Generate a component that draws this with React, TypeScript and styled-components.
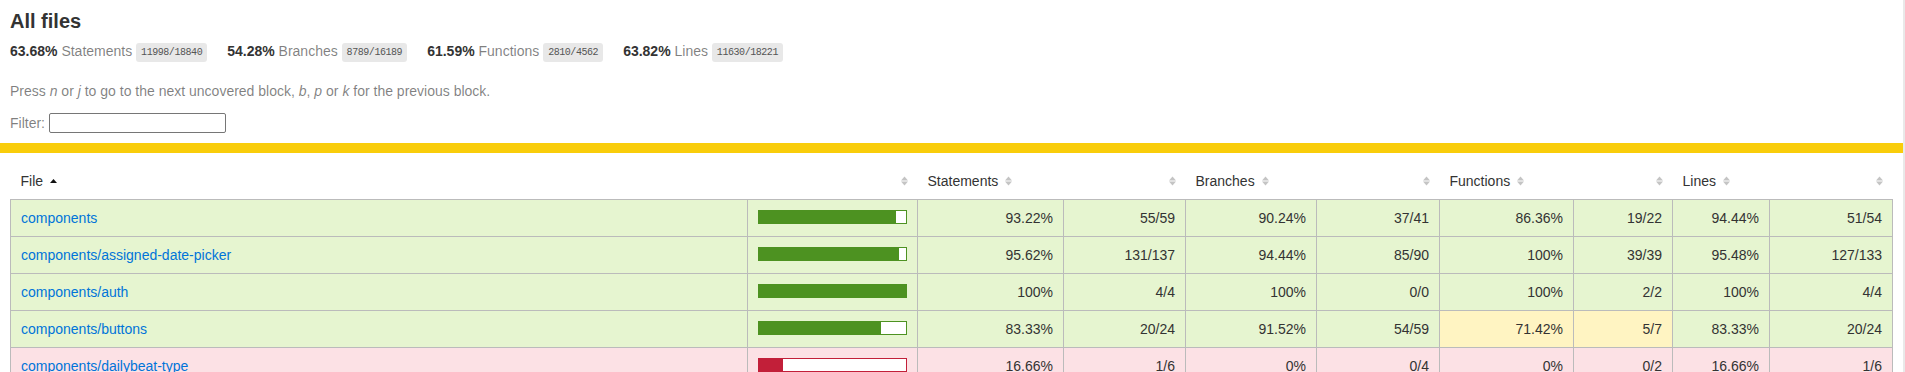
import React from 'react'
import styled, { createGlobalStyle } from 'styled-components'

type Level = 'high' | 'medium' | 'low'

interface Metric {
    pct: string
    covered: number
    total: number
}

interface FileRow {
    name: string
    statements: Metric
    branches: Metric
    functions: Metric
    lines: Metric
}

const m = (pct: string, covered: number, total: number): Metric => ({ pct, covered, total })

const rows: FileRow[] = [
    { name: 'components', statements: m('93.22%', 55, 59), branches: m('90.24%', 37, 41), functions: m('86.36%', 19, 22), lines: m('94.44%', 51, 54) },
    { name: 'components/assigned-date-picker', statements: m('95.62%', 131, 137), branches: m('94.44%', 85, 90), functions: m('100%', 39, 39), lines: m('95.48%', 127, 133) },
    { name: 'components/auth', statements: m('100%', 4, 4), branches: m('100%', 0, 0), functions: m('100%', 2, 2), lines: m('100%', 4, 4) },
    { name: 'components/buttons', statements: m('83.33%', 20, 24), branches: m('91.52%', 54, 59), functions: m('71.42%', 5, 7), lines: m('83.33%', 20, 24) },
    { name: 'components/dailybeat-type', statements: m('16.66%', 1, 6), branches: m('0%', 0, 4), functions: m('0%', 0, 2), lines: m('16.66%', 1, 6) },
]

const percent = (x: Metric) => (x.total === 0 ? 100 : (x.covered / x.total) * 100)
const levelOf = (x: Metric): Level => {
    const p = percent(x)
    return p >= 80 ? 'high' : p >= 50 ? 'medium' : 'low'
}

const light: Record<Level, string> = {
    high: 'rgb(230, 245, 208)',
    medium: '#fff4c2',
    low: '#fce1e5',
}

const dark: Record<Level, string> = {
    high: 'rgb(77, 146, 33)',
    medium: '#f9cd0b',
    low: '#c21f39',
}

const GlobalStyle = createGlobalStyle`
    *, *:after, *:before { box-sizing: border-box; }
    html, body {
        margin: 0;
        padding: 0;
        height: 100%;
        overflow: hidden;
    }
    body {
        font-family: "Liberation Sans", Arial, sans-serif;
        font-size: 14px;
        color: #333;
        background: #fff;
        border-right: 2px solid #e9e9e9;
    }
`

const Header = styled.div`
    padding: 10px;
`

const Title = styled.h1`
    font-size: 20px;
    font-weight: bold;
    margin: 0;
`

const Stats = styled.div`
    display: flex;
    padding: 10px 0;
`

const Stat = styled.div`
    padding-right: 20px;
    white-space: nowrap;
`

const Strong = styled.span`
    font-weight: bold;
`

const Quiet = styled.span`
    color: rgba(0, 0, 0, 0.5);
`

const Fraction = styled.span`
    font-family: "Liberation Mono", monospace;
    font-size: 10px;
    letter-spacing: -0.45px;
    color: #555;
    background: #e8e8e8;
    padding: 4px 5px;
    border-radius: 3px;
    vertical-align: middle;
`

const Hint = styled.p`
    margin: 14px 0;
    color: rgba(0, 0, 0, 0.5);
`

const FilterRow = styled.div`
    display: flex;
    align-items: center;
    gap: 4px;
    height: 20px;
    color: rgba(0, 0, 0, 0.5);
`

const Search = styled.input`
    width: 177px;
    height: 20px;
    padding: 1px 2px;
    border: 1px solid #767676;
    border-radius: 2px;
    background: #fff;
    font: inherit;
`

const StatusLine = styled.div<{ $level: Level }>`
    height: 10px;
    background: ${p => dark[p.$level]};
`

const TableWrap = styled.div`
    padding: 10px;
`

const Table = styled.table`
    width: 100%;
    border-collapse: collapse;
    table-layout: fixed;
`

const Body = styled.tbody`
    border: 1px solid #bbb;
`

const BodyRow = styled.tr`
    border-bottom: 1px solid #bbb;
`

const HeadCell = styled.th<{ $right?: boolean }>`
    padding: 10px;
    font-weight: normal;
    white-space: nowrap;
    text-align: ${p => (p.$right ? 'right' : 'left')};
    background: #fff;
`

const Cell = styled.td<{ $level: Level; $right?: boolean }>`
    padding: 10px;
    border-right: 1px solid #bbb;
    background: ${p => light[p.$level]};
    text-align: ${p => (p.$right ? 'right' : 'left')};
    white-space: nowrap;
    vertical-align: top;

    &:last-child {
        border-right: none;
    }
`

const FileLink = styled.a`
    color: #0074d9;
    text-decoration: none;
`

const Chart = styled.div<{ $level: Level }>`
    display: flex;
    height: 14px;
    border: 1px solid ${p => dark[p.$level]};
    background: #fff;
`

const Fill = styled.div<{ $level: Level }>`
    height: 12px;
    background: ${p => dark[p.$level]};
`

const SortIcon = styled.svg`
    display: inline-block;
    width: 7px;
    height: 10px;
    margin-left: 7px;
`

function Sorter({ sorted }: { sorted?: boolean }) {
    if (sorted) {
        return (
            <SortIcon viewBox="0 0 7 10">
                <polygon points="0,7 3.5,3 7,7" fill="#111" />
            </SortIcon>
        )
    }
    return (
        <SortIcon viewBox="0 0 7 10">
            <polygon points="0,4.5 3.5,0.5 7,4.5" fill="#c4c4c4" />
            <polygon points="0,5.5 3.5,9.5 7,5.5" fill="#c4c4c4" />
        </SortIcon>
    )
}

const colWidths = [undefined, 170, 146, 122, 131, 123, 134, 99, 97, 123]

const metricKeys = ['statements', 'branches', 'functions', 'lines'] as const
const metricLabels = ['Statements', 'Branches', 'Functions', 'Lines']

const totals: Metric[] = [
    m('63.68%', 11998, 18840),
    m('54.28%', 8789, 16189),
    m('61.59%', 2810, 4562),
    m('63.82%', 11630, 18221),
]

export default function App() {
    return (
        <>
            <GlobalStyle />
            <Header>
                <Title>All files</Title>
                <Stats>
                    {totals.map((t, i) => (
                        <Stat key={metricLabels[i]}>
                            <Strong>{t.pct}</Strong> <Quiet>{metricLabels[i]}</Quiet>{' '}
                            <Fraction>{t.covered}/{t.total}</Fraction>
                        </Stat>
                    ))}
                </Stats>
                <Hint>
                    Press <em>n</em> or <em>j</em> to go to the next uncovered block, <em>b</em>, <em>p</em> or{' '}
                    <em>k</em> for the previous block.
                </Hint>
                <FilterRow>
                    Filter: <Search type="search" />
                </FilterRow>
            </Header>
            <StatusLine $level={levelOf(totals[0])} />
            <TableWrap>
                <Table>
                    <colgroup>
                        {colWidths.map((w, i) => (
                            <col key={i} style={w ? { width: w } : undefined} />
                        ))}
                    </colgroup>
                    <thead>
                        <tr>
                            <HeadCell>
                                File
                                <Sorter sorted />
                            </HeadCell>
                            <HeadCell $right>
                                <Sorter />
                            </HeadCell>
                            {metricLabels.map(label => (
                                <React.Fragment key={label}>
                                    <HeadCell>
                                        {label}
                                        <Sorter />
                                    </HeadCell>
                                    <HeadCell $right>
                                        <Sorter />
                                    </HeadCell>
                                </React.Fragment>
                            ))}
                        </tr>
                    </thead>
                    <Body>
                        {rows.map(row => {
                            const st = levelOf(row.statements)
                            const fill = Math.floor(percent(row.statements))
                            return (
                                <BodyRow key={row.name}>
                                    <Cell $level={st}>
                                        <FileLink href="#">{row.name}</FileLink>
                                    </Cell>
                                    <Cell $level={st}>
                                        <Chart $level={st}>
                                            <Fill $level={st} style={{ width: `${fill}%` }} />
                                        </Chart>
                                    </Cell>
                                    {metricKeys.map(key => {
                                        const metric = row[key]
                                        const lv = levelOf(metric)
                                        return (
                                            <React.Fragment key={key}>
                                                <Cell $level={lv} $right>{metric.pct}</Cell>
                                                <Cell $level={lv} $right>
                                                    {metric.covered}/{metric.total}
                                                </Cell>
                                            </React.Fragment>
                                        )
                                    })}
                                </BodyRow>
                            )
                        })}
                    </Body>
                </Table>
            </TableWrap>
        </>
    )
}
